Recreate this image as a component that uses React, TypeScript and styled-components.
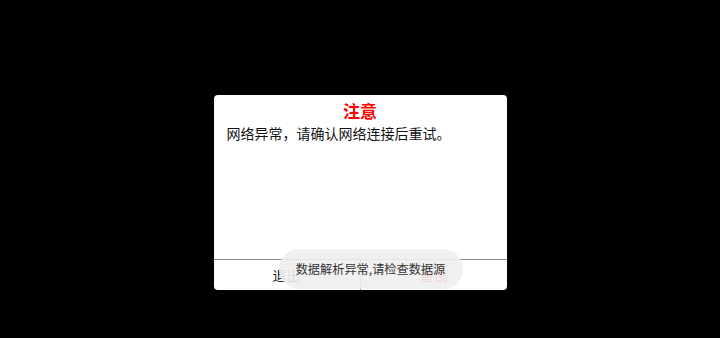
import styled, { createGlobalStyle } from "styled-components";

const GlobalStyle = createGlobalStyle`
  html, body {
    margin: 0;
    padding: 0;
    background: #000;
  }
  body {
    font-family: "Noto Sans CJK SC", "Noto Sans", sans-serif;
  }
`;

export default function App() {
  return (
    <Screen>
      <GlobalStyle />
      <Dialog>
        <Title>注意</Title>
        <Message>网络异常，请确认网络连接后重试。</Message>
        <Footer>
          <FooterButton>退出</FooterButton>
          <FooterButton $danger>重试</FooterButton>
        </Footer>
        <Toast>数据解析异常,请检查数据源</Toast>
      </Dialog>
    </Screen>
  );
}

const Screen = styled.div`
  width: 720px;
  height: 338px;
  background: #000;
  display: flex;
  justify-content: center;
  align-items: flex-start;
  padding-top: 95px;
  box-sizing: border-box;
`;

const Dialog = styled.div`
  position: relative;
  width: 293px;
  height: 195px;
  background: #fff;
  border-radius: 4px;
  display: flex;
  flex-direction: column;
`;

const Title = styled.div`
  margin-top: 5px;
  text-align: center;
  color: #f00;
  font-size: 17px;
  font-weight: bold;
  line-height: 22px;
`;

const Message = styled.div`
  margin-top: 1px;
  padding: 0 13px;
  color: #111;
  font-size: 14px;
  line-height: 20px;
`;

const Footer = styled.div`
  margin-top: auto;
  height: 30px;
  border-top: 1px solid #8a8a8a;
  display: flex;
`;

const FooterButton = styled.div<{ $danger?: boolean }>`
  flex: 1;
  display: flex;
  align-items: center;
  justify-content: center;
  font-size: 14px;
  color: ${(p) => (p.$danger ? "#f00" : "#222")};
  & + & {
    border-left: 1px solid #8a8a8a;
  }
`;

const Toast = styled.div`
  position: absolute;
  left: 65px;
  top: 154px;
  width: 184px;
  height: 40px;
  border-radius: 20px;
  background: rgba(238, 238, 238, 0.9);
  color: #333;
  font-size: 12.2px;
  display: flex;
  align-items: center;
  justify-content: center;
`;
